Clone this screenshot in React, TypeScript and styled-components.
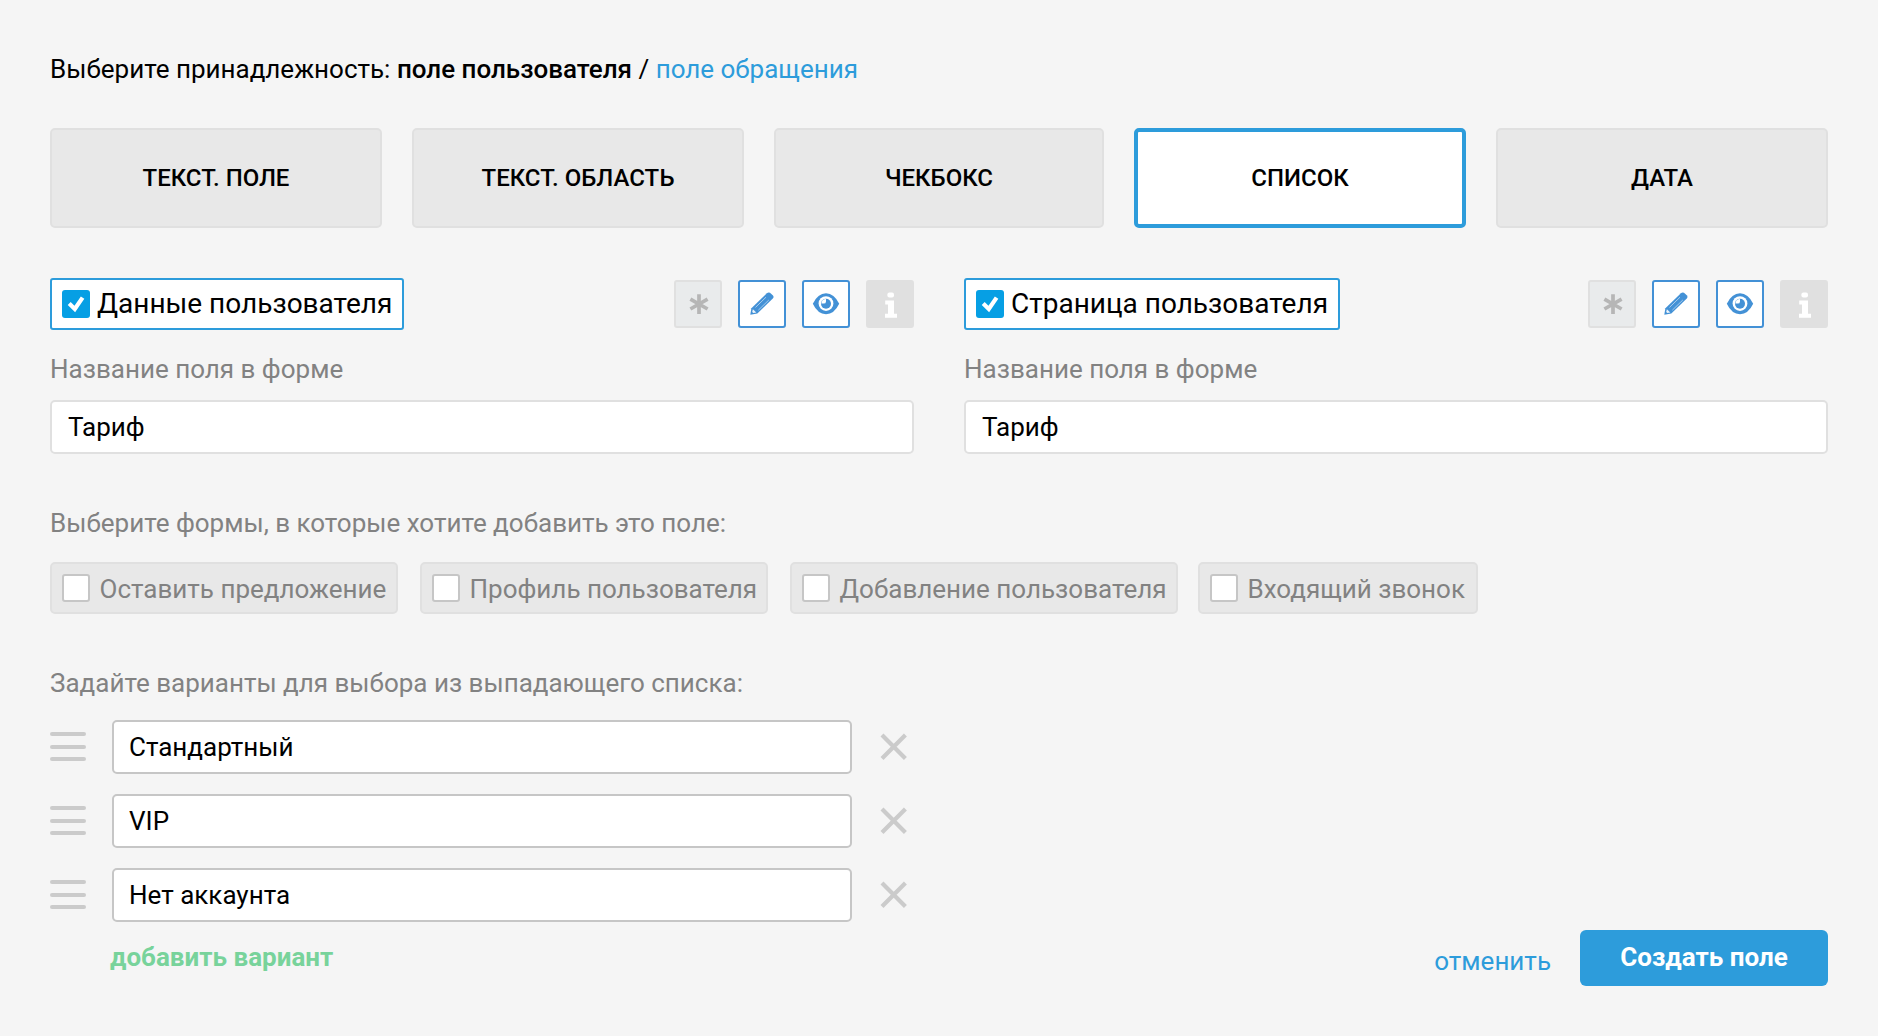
import React from 'react';
import styled, { createGlobalStyle, css } from 'styled-components';

const BLUE = '#2d9cdb';

const Global = createGlobalStyle`
  *, *::before, *::after { box-sizing: border-box; }
  body {
    margin: 0;
    background: #f5f5f5;
    color: #000;
    font-family: Roboto, 'Open Sans', sans-serif;
    font-size: 26px;
    line-height: 30px;
  }
  input, button { font: inherit; color: inherit; margin: 0; }
`;

const Page = styled.main`
  width: 1878px;
  height: 1036px;
  padding: 54px 50px 0;
  overflow: hidden;
`;

const Scope = styled.p`
  margin: 0 0 44px;
  white-space: nowrap;
`;

const Strong = styled.strong`
  font-weight: 500;
`;

const Link = styled.a`
  color: ${BLUE};
  text-decoration: none;
`;

const Tabs = styled.div`
  display: grid;
  grid-template-columns: 332px 332px 330px 332px 332px;
  gap: 30px;
  margin-bottom: 50px;
`;

const Tab = styled.button<{ $active?: boolean }>`
  height: 100px;
  padding: 0;
  border: 2px solid #e0e0e0;
  border-radius: 5px;
  background: #e8e8e8;
  font-size: 24px;
  font-weight: 500;
  text-align: center;
  ${(p) => p.$active && css`
    border: 4px solid ${BLUE};
    background: #fff;
  `}
`;

const Columns = styled.div`
  display: grid;
  grid-template-columns: 1fr 1fr;
  gap: 50px;
  margin-bottom: 54px;
`;

const ColumnHead = styled.div`
  display: flex;
  justify-content: space-between;
  align-items: flex-start;
  margin-bottom: 24px;
`;

const Toggle = styled.label`
  display: flex;
  align-items: center;
  height: 52px;
  padding: 0 10px;
  border: 2px solid ${BLUE};
  border-radius: 3px;
  background: #fff;
  font-size: 28px;
  white-space: nowrap;
`;

const CheckedBox = styled.span`
  display: flex;
  width: 28px;
  height: 28px;
  margin-right: 7px;
  border-radius: 3px;
  background: #069fe4;
`;

const Actions = styled.div`
  display: flex;
  gap: 16px;
  padding-top: 2px;
`;

const tones = {
  muted: { border: '#e0e0e0', background: '#e9ebec', color: '#b6b6b6' },
  active: { border: '#4391d6', background: '#fff', color: '#4391d6' },
  solid: { border: '#e0e0e0', background: '#e0e0e0', color: '#fff' },
};

const IconButton = styled.button<{ $tone: keyof typeof tones }>`
  display: flex;
  width: 48px;
  height: 48px;
  padding: 0;
  border: 2px solid ${(p) => tones[p.$tone].border};
  border-radius: 3px;
  background: ${(p) => tones[p.$tone].background};
  color: ${(p) => tones[p.$tone].color};
`;

const Caption = styled.div<{ $gap: number }>`
  margin-bottom: ${(p) => p.$gap}px;
  color: #828282;
  white-space: nowrap;
`;

const Field = styled.input<{ $option?: boolean }>`
  display: block;
  width: ${(p) => (p.$option ? '740px' : '100%')};
  height: 54px;
  padding: 0 ${(p) => (p.$option ? '15px' : '16px')};
  border: 2px solid ${(p) => (p.$option ? '#c6c6c6' : '#e0e0e0')};
  border-radius: 5px;
  background: #fff;
  outline: none;
`;

const Chips = styled.div`
  display: flex;
  gap: 22px;
  margin-bottom: 54px;
`;

const Chip = styled.label<{ $width: number }>`
  display: flex;
  align-items: center;
  width: ${(p) => p.$width}px;
  height: 52px;
  padding: 0 0 0 10px;
  border: 2px solid #e0e0e0;
  border-radius: 5px;
  background: #e8e8e8;
  color: #828282;
  white-space: nowrap;
  &:last-child { margin-left: -2px; }
`;

const EmptyBox = styled.span`
  width: 28px;
  height: 28px;
  margin-right: 9.5px;
  border: 2px solid #c6c6c6;
  border-radius: 3px;
  background: #fff;
`;

const ChipText = styled.span`
  padding-top: 2px;
`;

const Options = styled.div`
  display: flex;
  flex-direction: column;
  gap: 20px;
`;

const OptionRow = styled.div`
  display: flex;
  align-items: center;
`;

const Burger = styled.span`
  display: flex;
  flex-direction: column;
  gap: 8.5px;
  width: 36px;
  margin-right: 26px;
  padding-bottom: 1px;
`;

const Bar = styled.i`
  height: 4px;
  border-radius: 2px;
  background: #cbcbcb;
`;

const Cross = styled.svg`
  width: 28px;
  height: 28px;
  margin-left: 28px;
`;

const Footer = styled.div`
  display: flex;
  align-items: flex-start;
  padding: 8px 0 0 60px;
`;

const AddOption = styled.a`
  margin: 12px auto 0 0;
  color: #78d39b;
  font-weight: 700;
`;

const Cancel = styled.a`
  margin: 16px 29px 0 0;
  color: ${BLUE};
`;

const Submit = styled.button`
  width: 248px;
  height: 56px;
  padding: 0 0 2px;
  border: 0;
  border-radius: 6px;
  background: ${BLUE};
  color: #fff;
  font-weight: 700;
`;

const CheckIcon = () => (
  <svg width="28" height="28" viewBox="0 0 28 28">
    <path d="M7.2 13.6 12.8 19 20.6 7.6" fill="none" stroke="#fff" strokeWidth="4.2" />
  </svg>
);

const AsteriskIcon = () => (
  <svg width="44" height="44" viewBox="2 2 44 44">
    <path d="M25 14.2V34M16.4 19.2l17.2 9.8M33.6 19.2l-17.2 9.8" stroke="currentColor" strokeWidth="3.7" fill="none" />
  </svg>
);

const PencilIcon = () => (
  <svg width="44" height="44" viewBox="2 2 44 44">
    <path
      d="M12.3 34.8 13.4 28.2 28.9 13.2Q30.4 11.8 32 12.8L35 15.5Q36.2 17 34.8 18.5L19.3 33.4Z"
      fill="currentColor"
    />
    <path d="M17.5 27.4 28 17.2M20.3 30.2 30.8 20" stroke="#fff" strokeWidth=".9" opacity=".6" />
    <path d="M14.9 29.2 18.3 32.4 15.3 33 14.2 32Z" fill="#fff" opacity=".9" />
  </svg>
);

const EyeIcon = () => (
  <svg width="44" height="44" viewBox="2 2 44 44">
    <path
      d="M10.8 23.8Q15.8 13.2 24 13.2T37.2 23.8Q32.2 34.2 24 34.2T10.8 23.8Z"
      fill="currentColor"
    />
    <circle cx="24" cy="23.6" r="7.4" fill="#fff" />
    <circle cx="24" cy="23.7" r="5" fill="currentColor" />
    <path d="M19.4 23.6A4.6 4.6 0 0 1 24 19V21.4A2.2 2.2 0 0 1 21.8 23.6Z" fill="#fff" />
  </svg>
);

const InfoIcon = () => (
  <svg width="44" height="44" viewBox="2 2 44 44">
    <rect x="21.4" y="12.4" width="6.6" height="5.2" rx="2" fill="currentColor" />
    <path d="M19.2 20.6H28V33.8H31V37.8H19V33.8H22V24.4H19.2Z" fill="currentColor" />
  </svg>
);

const tabs = ['ТЕКСТ. ПОЛЕ', 'ТЕКСТ. ОБЛАСТЬ', 'ЧЕКБОКС', 'СПИСОК', 'ДАТА'];
const forms: [string, number][] = [
  ['Оставить предложение', 348],
  ['Профиль пользователя', 348],
  ['Добавление пользователя', 388],
  ['Входящий звонок', 280],
];
const options = ['Стандартный', 'VIP', 'Нет аккаунта'];

const FieldColumn = ({ title }: { title: string }) => (
  <section>
    <ColumnHead>
      <Toggle>
        <CheckedBox><CheckIcon /></CheckedBox>
        {title}
      </Toggle>
      <Actions>
        <IconButton $tone="muted"><AsteriskIcon /></IconButton>
        <IconButton $tone="active"><PencilIcon /></IconButton>
        <IconButton $tone="active"><EyeIcon /></IconButton>
        <IconButton $tone="solid"><InfoIcon /></IconButton>
      </Actions>
    </ColumnHead>
    <Caption $gap={16}>Название поля в форме</Caption>
    <Field defaultValue="Тариф" />
  </section>
);

export default function App() {
  return (
    <Page>
      <Global />
      <Scope>
        Выберите принадлежность: <Strong>поле пользователя</Strong> / <Link>поле обращения</Link>
      </Scope>
      <Tabs>
        {tabs.map((t) => <Tab key={t} $active={t === 'СПИСОК'}>{t}</Tab>)}
      </Tabs>
      <Columns>
        <FieldColumn title="Данные пользователя" />
        <FieldColumn title="Страница пользователя" />
      </Columns>
      <Caption $gap={24}>Выберите формы, в которые хотите добавить это поле:</Caption>
      <Chips>
        {forms.map(([name, width]) => (
          <Chip key={name} $width={width}><EmptyBox /><ChipText>{name}</ChipText></Chip>
        ))}
      </Chips>
      <Caption $gap={22}>Задайте варианты для выбора из выпадающего списка:</Caption>
      <Options>
        {options.map((o) => (
          <OptionRow key={o}>
            <Burger><Bar /><Bar /><Bar /></Burger>
            <Field $option defaultValue={o} />
            <Cross viewBox="0 0 28 28">
              <path d="M2 2 25.4 25.4M25.4 2 2 25.4" stroke="#cbcbcb" strokeWidth="4.2" />
            </Cross>
          </OptionRow>
        ))}
      </Options>
      <Footer>
        <AddOption>добавить вариант</AddOption>
        <Cancel>отменить</Cancel>
        <Submit>Создать поле</Submit>
      </Footer>
    </Page>
  );
}
